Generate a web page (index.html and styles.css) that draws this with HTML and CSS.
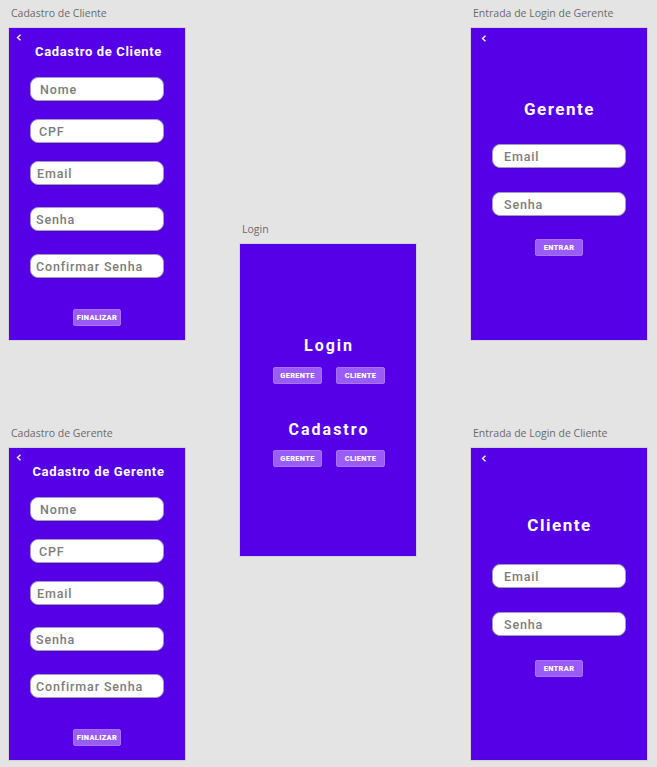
FILE: index.html
```html
<!DOCTYPE html>
<html lang="pt">
<head>
<meta charset="utf-8">
<title>Telas</title>
<link rel="stylesheet" href="styles.css">
</head>
<body>
<div class="canvas">

  <section class="frame frame-a">
    <div class="frame-label">Cadastro de Cliente</div>
    <div class="board">
      <svg class="back" width="6" height="7" viewBox="0 0 6 7"><polyline points="4.5,0.8 1.5,3.5 4.5,6.2" fill="none" stroke="#fff" stroke-width="1.4"/></svg>
      <h2 class="title-sm">Cadastro de Cliente</h2>
      <div class="field f-first">Nome</div>
      <div class="field f-18 ind-9">CPF</div>
      <div class="field f-18 ind-7">Email</div>
      <div class="field f-22 ind-6">Senha</div>
      <div class="field f-23 ind-6">Confirmar Senha</div>
      <div class="btn f-31">FINALIZAR</div>
    </div>
  </section>

  <section class="frame frame-b">
    <div class="frame-label">Cadastro de Gerente</div>
    <div class="board">
      <svg class="back" width="6" height="7" viewBox="0 0 6 7"><polyline points="4.5,0.8 1.5,3.5 4.5,6.2" fill="none" stroke="#fff" stroke-width="1.4"/></svg>
      <h2 class="title-sm">Cadastro de Gerente</h2>
      <div class="field f-first">Nome</div>
      <div class="field f-18 ind-9">CPF</div>
      <div class="field f-18 ind-7">Email</div>
      <div class="field f-22 ind-6">Senha</div>
      <div class="field f-23 ind-6">Confirmar Senha</div>
      <div class="btn f-31">FINALIZAR</div>
    </div>
  </section>

  <section class="frame frame-c">
    <div class="frame-label">Login</div>
    <div class="board board-login">
      <h2 class="title-md">Login</h2>
      <div class="btn-row r-11">
        <div class="btn">GERENTE</div>
        <div class="btn">CLIENTE</div>
      </div>
      <h2 class="title-md t-36">Cadastro</h2>
      <div class="btn-row r-10">
        <div class="btn">GERENTE</div>
        <div class="btn">CLIENTE</div>
      </div>
    </div>
  </section>

  <section class="frame frame-d">
    <div class="frame-label">Entrada de Login de Gerente</div>
    <div class="board">
      <svg class="back back-r" width="6" height="7" viewBox="0 0 6 7"><polyline points="4.5,0.8 1.5,3.5 4.5,6.2" fill="none" stroke="#fff" stroke-width="1.4"/></svg>
      <h2 class="title-lg t-57">Gerente</h2>
      <div class="field f-25 ind-11">Email</div>
      <div class="field f-24 ind-11">Senha</div>
      <div class="btn f-23">ENTRAR</div>
    </div>
  </section>

  <section class="frame frame-e">
    <div class="frame-label">Entrada de Login de Cliente</div>
    <div class="board">
      <svg class="back back-r" width="6" height="7" viewBox="0 0 6 7"><polyline points="4.5,0.8 1.5,3.5 4.5,6.2" fill="none" stroke="#fff" stroke-width="1.4"/></svg>
      <h2 class="title-lg t-53">Cliente</h2>
      <div class="field f-29 ind-11">Email</div>
      <div class="field f-24 ind-11">Senha</div>
      <div class="btn f-24">ENTRAR</div>
    </div>
  </section>

</div>
</body>
</html>
```

FILE: styles.css
```css
* { box-sizing: border-box; }

html, body {
  margin: 0;
  padding: 0;
  background: #e4e4e4;
}

.canvas {
  position: relative;
  width: 657px;
  height: 767px;
  overflow: hidden;
  background: #e4e4e4;
}

.frame {
  position: absolute;
  width: 176px;
}
.frame-a { left: 9px; top: 6px; }
.frame-b { left: 9px; top: 426px; }
.frame-c { left: 240px; top: 222px; }
.frame-d { left: 471px; top: 6px; }
.frame-e { left: 471px; top: 426px; }

.frame-label {
  height: 22px;
  padding-left: 2px;
  font-family: "Open Sans", "Noto Sans", sans-serif;
  font-size: 10.5px;
  line-height: 14px;
  color: #6a6a6a;
  white-space: nowrap;
}

.board {
  width: 176px;
  height: 312px;
  background: #5500e6;
  box-shadow: 0 0 0 1px #d3d3d3;
  display: flex;
  flex-direction: column;
  align-items: center;
  font-family: Roboto, "Noto Sans", sans-serif;
}

.back {
  display: block;
  align-self: flex-start;
  margin: 6px 0 0 7px;
}
.back-r { margin: 7px 0 0 10px; }

h2 { margin: 0; color: #fff; font-weight: 700; white-space: nowrap; }

.title-sm {
  margin-top: 3px;
  margin-left: 3px;
  font-size: 13px;
  line-height: 16px;
  letter-spacing: 0.65px;
}
.title-md {
  font-size: 16px;
  line-height: 20px;
  letter-spacing: 2px;
  margin-left: 2px;
}
.title-lg {
  font-size: 17px;
  line-height: 20px;
  letter-spacing: 1.5px;
  margin-left: 1px;
}

.board-login { padding-top: 92px; }

.field {
  width: 134px;
  height: 24px;
  background: #fff;
  border: 1px solid #a898c6;
  border-radius: 8px;
  box-shadow: 0 1px 0 rgba(60, 20, 120, 0.35);
  padding-left: 9px;
  padding-top: 1px;
  font-size: 12.5px;
  font-weight: 500;
  line-height: 22px;
  letter-spacing: 0.85px;
  color: #7c7c7c;
  white-space: nowrap;
}
.ind-6 { padding-left: 5px; }
.ind-7 { padding-left: 6px; }
.ind-9 { padding-left: 8px; }
.ind-11 { padding-left: 11px; }

.btn {
  width: 48px;
  height: 17px;
  background: #9a5cf6;
  border: 1px solid #a873f4;
  border-radius: 2px;
  color: #fff;
  font-size: 7.4px;
  font-weight: 900;
  letter-spacing: 0.35px;
  line-height: 15px;
  text-align: center;
}

.btn-row {
  display: flex;
  gap: 14px;
  margin-left: 2px;
}
.btn-row .btn { width: 49px; }

.f-first { margin-top: 17px; }
.f-18 { margin-top: 18px; }
.f-22 { margin-top: 22px; }
.f-23 { margin-top: 23px; }
.f-24 { margin-top: 24px; }
.f-25 { margin-top: 25px; }
.f-29 { margin-top: 29px; }
.f-31 { margin-top: 31px; }
.r-11 { margin-top: 11px; }
.r-10 { margin-top: 10px; }
.t-36 { margin-top: 36px; }
.t-53 { margin-top: 53px; }
.t-57 { margin-top: 57px; }
```
